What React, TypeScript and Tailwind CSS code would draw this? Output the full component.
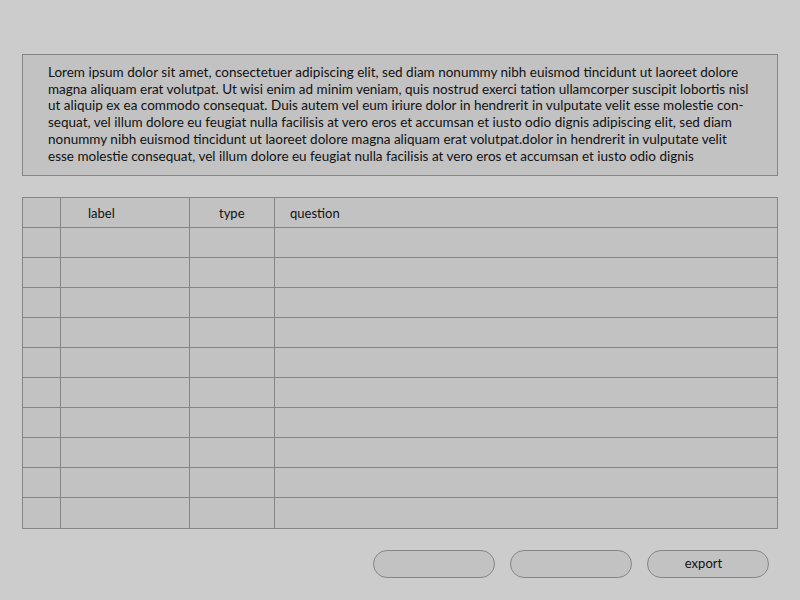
import React from "react";

const lines = [
  "Lorem ipsum dolor sit amet, consectetuer adipiscing elit, sed diam nonummy nibh euismod tincidunt ut laoreet dolore",
  "magna aliquam erat volutpat. Ut wisi enim ad minim veniam, quis nostrud exerci tation ullamcorper suscipit lobortis nisl",
  "ut aliquip ex ea commodo consequat. Duis autem vel eum iriure dolor in hendrerit in vulputate velit esse molestie con-",
  "sequat, vel illum dolore eu feugiat nulla facilisis at vero eros et accumsan et iusto odio dignis adipiscing elit, sed diam",
  "nonummy nibh euismod tincidunt ut laoreet dolore magna aliquam erat volutpat.dolor in hendrerit in vulputate velit",
  "esse molestie consequat, vel illum dolore eu feugiat nulla facilisis at vero eros et accumsan et iusto odio dignis",
];

function Row({ header, last }: { header?: boolean; last?: boolean }) {
  return (
    <div className={`flex h-[30px] ${last ? "" : "border-b border-[#868686]"}`}>
      <div className="w-[38px] shrink-0 border-r border-[#868686]" />
      <div className="w-[129px] shrink-0 border-r border-[#868686] flex items-center pl-[27px] pt-[2px]">
        {header ? "label" : ""}
      </div>
      <div className="w-[85px] shrink-0 border-r border-[#868686] flex items-center pl-[29px] pt-[2px]">
        {header ? "type" : ""}
      </div>
      <div className="flex-1 flex items-center pl-[15px] pt-[2px]">{header ? "question" : ""}</div>
    </div>
  );
}

export default function App() {
  return (
    <div
      className="w-[800px] h-[600px] bg-[#cccccc] text-[#111] text-[13px] pt-[54px] px-[22px] flex flex-col"
      style={{ fontFamily: "Lato, 'Liberation Sans', sans-serif" }}
    >
      <div className="h-[122px] border border-[#868686] bg-[#c2c2c2] pl-[25px] pt-[9px] text-[13.5px] leading-[16.7px]">
        {lines.map((l, i) => (
          <div key={i} className="whitespace-nowrap">
            {l}
          </div>
        ))}
      </div>
      <div className="mt-[21px] border border-[#868686] bg-[#c2c2c2] flex flex-col">
        <Row header />
        {Array.from({ length: 9 }).map((_, i) => (
          <Row key={i} />
        ))}
        <Row last />
      </div>
      <div className="mt-[21px] flex justify-end gap-[15px] pr-[9px]">
        <div className="w-[122px] h-[28px] rounded-[14px] border border-[#868686] bg-[#c2c2c2]" />
        <div className="w-[122px] h-[28px] rounded-[14px] border border-[#868686] bg-[#c2c2c2]" />
        <div className="w-[122px] h-[28px] rounded-[14px] border border-[#868686] bg-[#c2c2c2] flex items-center justify-center pr-[9px]">
          export
        </div>
      </div>
    </div>
  );
}
